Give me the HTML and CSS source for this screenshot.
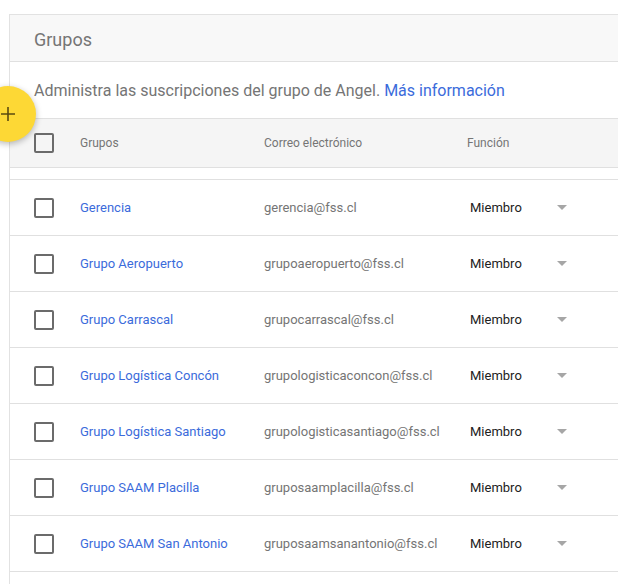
FILE: index.html
```html
<!DOCTYPE html>
<html>
<head>
<meta charset="utf-8">
<link rel="stylesheet" href="styles.css">
</head>
<body>
<div class="card">
  <div class="card-header">Grupos</div>
  <div class="desc">Administra las suscripciones del grupo de Angel. <a class="link">Más información</a></div>
  <div class="thead">
    <div class="c-check"><span class="box"></span></div>
    <div class="c-name">Grupos</div>
    <div class="c-mail">Correo electrónico</div>
    <div class="c-role">Función</div>
  </div>
  <div class="spacer"></div>
  <div class="row"><div class="c-check"><span class="box"></span></div><div class="c-name link">Gerencia</div><div class="c-mail">gerencia@fss.cl</div><div class="c-role role">Miembro</div><div class="c-arrow"><span class="tri"></span></div></div>
  <div class="row"><div class="c-check"><span class="box"></span></div><div class="c-name link">Grupo Aeropuerto</div><div class="c-mail">grupoaeropuerto@fss.cl</div><div class="c-role role">Miembro</div><div class="c-arrow"><span class="tri"></span></div></div>
  <div class="row"><div class="c-check"><span class="box"></span></div><div class="c-name link">Grupo Carrascal</div><div class="c-mail">grupocarrascal@fss.cl</div><div class="c-role role">Miembro</div><div class="c-arrow"><span class="tri"></span></div></div>
  <div class="row"><div class="c-check"><span class="box"></span></div><div class="c-name link">Grupo Logística Concón</div><div class="c-mail">grupologisticaconcon@fss.cl</div><div class="c-role role">Miembro</div><div class="c-arrow"><span class="tri"></span></div></div>
  <div class="row"><div class="c-check"><span class="box"></span></div><div class="c-name link">Grupo Logística Santiago</div><div class="c-mail">grupologisticasantiago@fss.cl</div><div class="c-role role">Miembro</div><div class="c-arrow"><span class="tri"></span></div></div>
  <div class="row"><div class="c-check"><span class="box"></span></div><div class="c-name link">Grupo SAAM Placilla</div><div class="c-mail">gruposaamplacilla@fss.cl</div><div class="c-role role">Miembro</div><div class="c-arrow"><span class="tri"></span></div></div>
  <div class="row"><div class="c-check"><span class="box"></span></div><div class="c-name link">Grupo SAAM San Antonio</div><div class="c-mail">gruposaamsanantonio@fss.cl</div><div class="c-role role">Miembro</div><div class="c-arrow"><span class="tri"></span></div></div>
</div>
<div class="fab"><svg width="16" height="16" viewBox="0 0 16 16"><path d="M8 1v14M1 8h14" stroke="#5a4a10" stroke-width="1.6" fill="none"/></svg></div>
</body>
</html>
```
FILE: styles.css
```css
html, body { margin: 0; padding: 0; }
body {
  background: #fff;
  font-family: Roboto, "Liberation Sans", sans-serif;
  overflow: hidden;
  width: 618px;
  height: 584px;
  position: relative;
}
.card {
  margin: 14px 0 0 9px;
  width: 609px;
  box-sizing: border-box;
  border-top: 1px solid #e2e2e2;
  border-left: 1px solid #e2e2e2;
  background: #fff;
  min-height: 570px;
}
.card-header {
  height: 46px;
  background: #f8f8f8;
  border-bottom: 1px solid #e0e0e0;
  padding-left: 24px;
  font-size: 18px;
  color: #757575;
  line-height: 50px;
}
.desc {
  height: 56px;
  line-height: 57px;
  padding-left: 24px;
  font-size: 16px;
  color: #757575;
}
.link { color: #3b6bdb; }
.thead {
  height: 48px;
  background: #f5f5f5;
  border-top: 1px solid #e0e0e0;
  border-bottom: 1px solid #e0e0e0;
  display: flex;
  align-items: center;
  font-size: 12px;
  color: #757575;
}
.spacer {
  height: 11px;
  border-bottom: 1px solid #e0e0e0;
}
.row {
  height: 55px;
  border-bottom: 1px solid #e0e0e0;
  display: flex;
  align-items: center;
  font-size: 13px;
  color: #757575;
}
.c-check { width: 70px; padding-left: 24px; box-sizing: border-box; display: flex; align-items: center; }
.c-name { width: 184px; }
.c-mail { width: 203px; }
.c-role { width: 90px; }
.role { color: #212121; padding-left: 3px; width: 87px; }
.thead .c-check, .row .c-check { height: 100%; }
.box {
  width: 16px;
  height: 16px;
  border: 2px solid #6b6b6b;
  border-radius: 2px;
  display: block;
}
.c-arrow { width: 20px; display: flex; align-items: center; }
.tri {
  width: 0; height: 0;
  border-left: 5px solid transparent;
  border-right: 5px solid transparent;
  border-top: 5px solid #a6a6a6;
}
.fab {
  position: absolute;
  left: -20px;
  top: 86px;
  width: 56px;
  height: 56px;
  border-radius: 50%;
  background: #fdd835;
  box-shadow: 0 2px 6px rgba(0,0,0,0.28);
  display: flex;
  align-items: center;
  justify-content: center;
}
```
